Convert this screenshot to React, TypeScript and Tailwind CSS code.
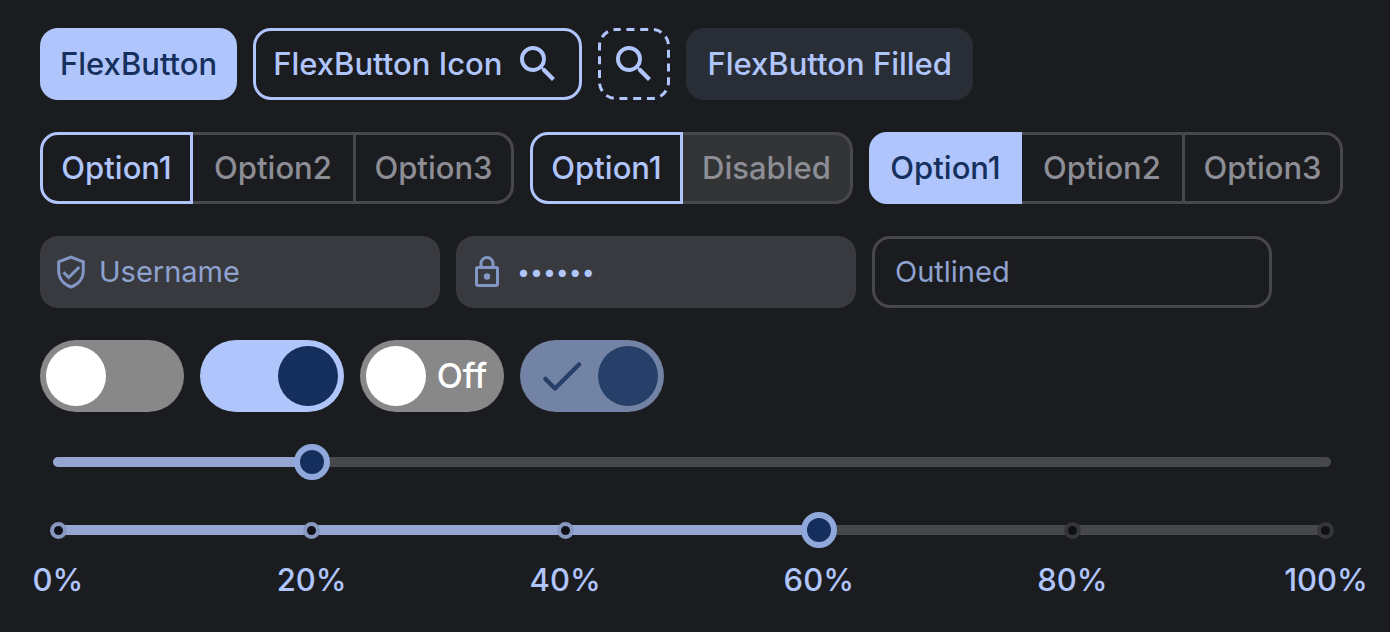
import type { ReactNode } from "react";

function SearchIcon() {
  return (
    <svg viewBox="0 0 24 24" className="size-12 shrink-0" fill="currentColor" aria-hidden="true">
      <path d="M15.5 14h-.79l-.28-.27A6.471 6.471 0 0 0 16 9.5 6.5 6.5 0 1 0 9.5 16c1.61 0 3.09-.59 4.23-1.57l.27.28v.79l5 4.99L20.49 19l-4.99-5zm-6 0C7.01 14 5 11.99 5 9.5S7.01 5 9.5 5 14 7.01 14 9.5 11.99 14 9.5 14z" />
    </svg>
  );
}

function ShieldIcon() {
  return (
    <svg viewBox="0 0 28 34" className="h-[34px] w-7 shrink-0" fill="none" stroke="currentColor" strokeWidth="3" aria-hidden="true">
      <path d="M14 2.2 26.3 6.8V16c0 7-4.5 13.300-12.300 16C6.200 29.300 1.700 23 1.700 16V6.800Z" />
      <path d="m6.500 17.300 5.200 5.200L22.300 12" />
    </svg>
  );
}

function LockIcon() {
  return (
    <svg viewBox="0 0 24 32" className="h-8 w-6 shrink-0" fill="none" stroke="currentColor" strokeWidth="3" aria-hidden="true">
      <rect x="1.500" y="11.500" width="21" height="18" rx="1.500" />
      <path d="M6 11.500V7.500a6 6 0 0 1 12 0v4" />
      <circle cx="12" cy="20.500" r="3.200" fill="currentColor" stroke="none" />
    </svg>
  );
}

type Option = { label: string; width: string; disabled?: boolean };

function Segments({ name, options, filled = false }: { name: string; options: Option[]; filled?: boolean }) {
  const active = filled
    ? "has-checked:border-[#b0c5fb] has-checked:bg-[#b0c5fb] has-checked:text-[#15305d]"
    : "has-checked:border-[#b0c5fb] has-checked:text-[#b0c5fb]";
  return (
    <div role="radiogroup" aria-label={name} className="flex h-18">
      {options.map((o, i) => (
        <label
          key={o.label}
          className={`relative flex items-center justify-center border-y-3 border-r-3 border-[#47484c] text-[#8d8e95] first:rounded-l-[18px] first:border-l-3 last:rounded-r-[18px] ${o.width} ${active} ${o.disabled ? "bg-[#333435]" : "cursor-pointer"}`}
        >
          <input type="radio" name={name} defaultChecked={i === 0} disabled={o.disabled} className="sr-only" />
          {o.label}
        </label>
      ))}
    </div>
  );
}

function Switch({ label, on = false, disabled = false, children }: { label: string; on?: boolean; disabled?: boolean; children?: ReactNode }) {
  const colors = disabled
    ? "has-checked:bg-[#7383a5] has-checked:text-[#264069]"
    : "has-checked:bg-[#b0c5fb] has-checked:text-[#152f5c]";
  return (
    <label className={`relative flex h-18 w-36 items-center rounded-full bg-[#888888] p-1.5 text-white has-checked:flex-row-reverse ${colors}`}>
      <input type="checkbox" role="switch" aria-label={label} defaultChecked={on} disabled={disabled} className="sr-only" />
      <span className="size-15 shrink-0 rounded-full bg-current" />
      <span className="flex grow justify-center text-[34px] leading-none">{children}</span>
    </label>
  );
}

const stops = [0, 20, 40, 60, 80, 100];

function Slider({ label, value, marks = false }: { label: string; value: number; marks?: boolean }) {
  return (
    <div>
      <div className="relative flex h-9 items-center">
        <div className={`h-2.5 grow overflow-hidden rounded-full bg-[#47484c] ${marks ? "mx-[18px]" : "mx-[13px]"}`}>
          <div className="h-full bg-[#95a5d1]" style={{ width: `${value}%` }} />
        </div>
        {marks && (
          <div className="absolute inset-x-[18px] top-[10px] flex justify-between">
            {stops.map((s) => (
              <span key={s} className="flex w-0 justify-center">
                <span className={`size-[17px] shrink-0 rounded-full border-4 bg-[#101116] ${s <= value ? "border-[#8797c0]" : "border-[#35363a]"}`} />
              </span>
            ))}
          </div>
        )}
        <input
          type="range"
          aria-label={label}
          defaultValue={value}
          step={marks ? 20 : 1}
          className="absolute inset-0 m-0 h-9 w-full cursor-pointer appearance-none bg-transparent [&::-webkit-slider-thumb]:size-9 [&::-webkit-slider-thumb]:appearance-none [&::-webkit-slider-thumb]:rounded-full [&::-webkit-slider-thumb]:border-6 [&::-webkit-slider-thumb]:border-solid [&::-webkit-slider-thumb]:border-[#90a7dc] [&::-webkit-slider-thumb]:bg-[#152f5c]"
        />
      </div>
      {marks && (
        <div className="mx-[18px] mt-3 flex justify-between leading-10 text-[#b0c5fb]">
          {stops.map((s) => (
            <span key={s} className="flex w-0 justify-center">{s}%</span>
          ))}
        </div>
      )}
    </div>
  );
}

const field = "flex h-18 w-[400px] items-center rounded-[18px] text-[29px] font-normal text-[#8297c5]";
const fieldInput = "min-w-0 grow bg-transparent text-[#b0c5fb] outline-none placeholder:text-[#8fa2d0]";

export default function App() {
  return (
    <main className="flex min-h-screen flex-col gap-8 bg-[#1b1c1f] pt-7 pr-[46px] pl-10 font-['Inter',sans-serif] text-[31px] leading-10 font-medium">
      <div className="flex gap-4">
        <button className="h-18 rounded-[18px] bg-[#b0c5fb] px-5 text-[#15305d]">FlexButton</button>
        <button className="flex h-18 items-center gap-3 rounded-[18px] border-3 border-[#b0c5fb] px-[17px] text-[#b0c5fb]">
          FlexButton Icon
          <SearchIcon />
        </button>
        <button aria-label="Search" className="relative flex size-18 items-center justify-center text-[#b0c5fb]">
          <svg viewBox="0 0 72 72" className="absolute inset-0 size-18" fill="none" stroke="currentColor" strokeWidth="3" strokeDasharray="8 5.760" strokeDashoffset="3.300" aria-hidden="true">
            <rect x="1.500" y="1.500" width="69" height="69" rx="16.500" />
          </svg>
          <SearchIcon />
        </button>
        <button className="h-18 rounded-[18px] bg-[#292d36] px-[21px] text-[#b0c5fb]">FlexButton Filled</button>
      </div>

      <div className="flex gap-4">
        <Segments
          name="Outlined options"
          options={[
            { label: "Option1", width: "w-[153px]" },
            { label: "Option2", width: "w-[163px]" },
            { label: "Option3", width: "w-[158px]" },
          ]}
        />
        <Segments
          name="Disabled options"
          options={[
            { label: "Option1", width: "w-[153px]" },
            { label: "Disabled", width: "w-[170px]", disabled: true },
          ]}
        />
        <Segments
          name="Filled options"
          filled
          options={[
            { label: "Option1", width: "w-[153px]" },
            { label: "Option2", width: "w-[163px]" },
            { label: "Option3", width: "w-[158px]" },
          ]}
        />
      </div>

      <div className="flex gap-4">
        <label className={`${field} gap-3.5 bg-[#393a3f] px-[17px]`}>
          <ShieldIcon />
          <input type="text" aria-label="Username" placeholder="Username" className={fieldInput} />
        </label>
        <label className={`${field} gap-[18px] bg-[#393a3f] px-[19px]`}>
          <LockIcon />
          <input type="password" aria-label="Password" defaultValue="secret" className={`${fieldInput} text-[23px]`} />
        </label>
        <label className={`${field} border-3 border-[#47484c] px-5`}>
          <input type="text" aria-label="Outlined" placeholder="Outlined" className={fieldInput} />
        </label>
      </div>

      <div className="flex gap-4">
        <Switch label="Plain switch" />
        <Switch label="Active switch" on />
        <Switch label="Labelled switch">Off</Switch>
        <Switch label="Disabled switch" on disabled>
          <svg viewBox="0 0 40 30" className="h-[30px] w-10" fill="none" stroke="currentColor" strokeWidth="4.500" strokeLinecap="round" strokeLinejoin="round" aria-hidden="true">
            <path d="m3.500 18 9.500 9.500L37 3.500" />
          </svg>
        </Switch>
      </div>

      <Slider label="Continuous value" value={20} />
      <Slider label="Stepped value" value={60} marks />
    </main>
  );
}
